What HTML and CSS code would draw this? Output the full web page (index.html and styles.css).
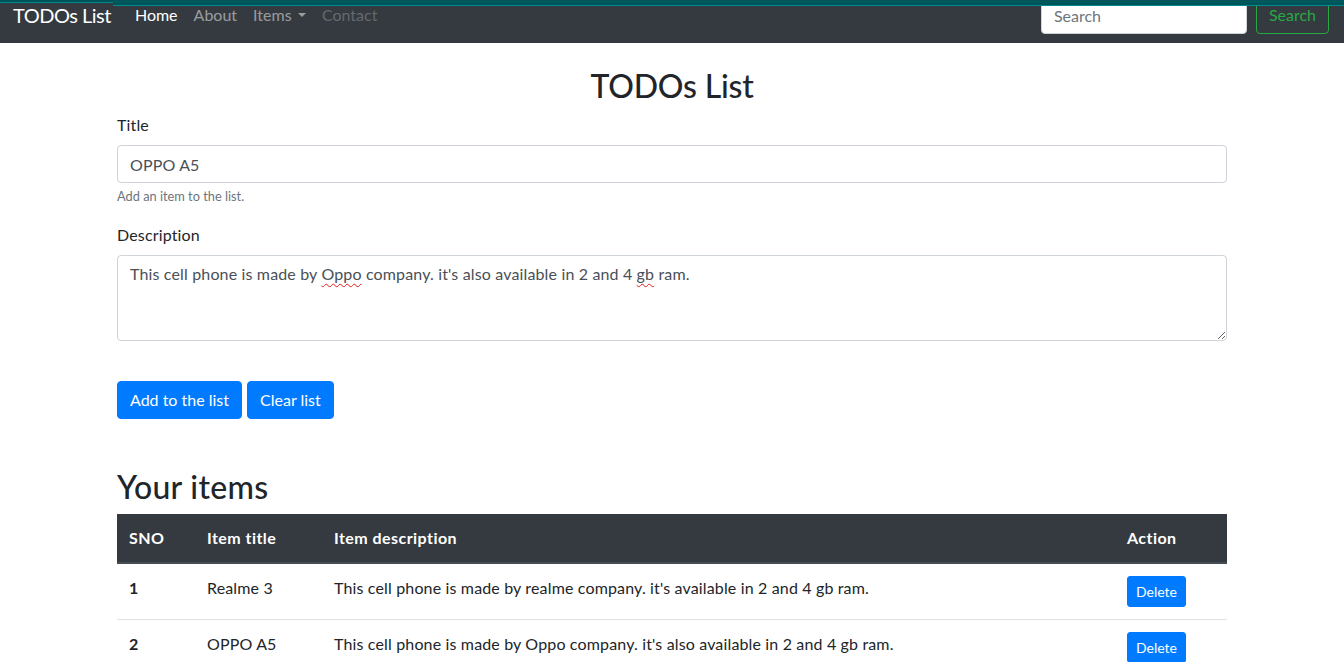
FILE: index.html
```html
<!DOCTYPE html>
<html lang="en">
<head>
<meta charset="utf-8">
<title>TODOs List</title>
<link rel="stylesheet" href="styles.css">
</head>
<body>
<div class="topstrip"><div class="strip-left"></div><div class="strip-right"></div></div>
<nav class="navbar">
  <a class="brand" href="#">TODOs List</a>
  <ul class="nav">
    <li><a class="nav-link active" href="#">Home</a></li>
    <li><a class="nav-link" href="#">About</a></li>
    <li><a class="nav-link" href="#">Items<span class="caret"></span></a></li>
    <li><a class="nav-link disabled" href="#">Contact</a></li>
  </ul>
  <form class="nav-search">
    <input class="search-input" type="search" placeholder="Search">
    <button class="btn-outline-success" type="button">Search</button>
  </form>
</nav>

<main class="container">
  <h2 class="page-title">TODOs List</h2>
  <div class="form-group">
    <label class="label">Title</label>
    <input class="form-control" type="text" value="OPPO A5">
    <small class="form-text">Add an item to the list.</small>
  </div>
  <div class="form-group">
    <label class="label">Description</label>
    <div class="form-control textarea">This cell phone is made by <span class="misspelled">Oppo</span> company. it's also available in 2 and 4 <span class="misspelled">gb</span> ram.</div>
  </div>
  <div class="actions">
    <button class="btn btn-primary" type="button">Add to the list</button>
    <button class="btn btn-primary" type="button">Clear list</button>
  </div>

  <section class="items">
    <h2 class="section-title">Your items</h2>
    <table class="table">
      <colgroup>
        <col class="col-sno">
        <col class="col-title">
        <col>
        <col class="col-action">
      </colgroup>
      <thead>
        <tr>
          <th>SNO</th>
          <th>Item title</th>
          <th>Item description</th>
          <th>Action</th>
        </tr>
      </thead>
      <tbody>
        <tr>
          <th>1</th>
          <td>Realme 3</td>
          <td>This cell phone is made by realme company. it's available in 2 and 4 gb ram.</td>
          <td><button class="btn btn-primary btn-sm" type="button">Delete</button></td>
        </tr>
        <tr>
          <th>2</th>
          <td>OPPO A5</td>
          <td>This cell phone is made by Oppo company. it's also available in 2 and 4 gb ram.</td>
          <td><button class="btn btn-primary btn-sm" type="button">Delete</button></td>
        </tr>
      </tbody>
    </table>
  </section>
</main>
</body>
</html>
```

FILE: styles.css
```css
* { box-sizing: border-box; }

html, body {
  margin: 0;
  padding: 0;
}

body {
  font-family: "Segoe UI", Lato, "Liberation Sans", sans-serif;
  font-size: 16px;
  line-height: 1.5;
  letter-spacing: 0.15px;
  color: #212529;
  background: #fff;
}

.topstrip {
  position: absolute;
  top: 0;
  left: 0;
  right: 0;
  display: flex;
  align-items: flex-start;
  z-index: 10;
}
.strip-left {
  width: 113px;
  height: 3px;
  background: #005257;
  border-bottom: 1px solid #00898e;
}
.strip-right {
  flex: 1;
  height: 6px;
  background: #00575b;
  border-bottom: 1px solid #00898e;
}

.navbar {
  display: flex;
  align-items: center;
  margin-top: -13px;
  height: 56px;
  padding: 8px 15px 8px 13px;
  background: #343a40;
}

.brand {
  font-size: 20px;
  line-height: 30px;
  letter-spacing: -0.5px;
  padding: 5px 0;
  margin-right: 16px;
  color: #fff;
  text-decoration: none;
}

.nav {
  display: flex;
  list-style: none;
  margin: 0;
  padding: 0;
  letter-spacing: 0;
}

.nav-link {
  display: block;
  padding: 8px;
  color: rgba(255, 255, 255, 0.5);
  text-decoration: none;
}
.nav-link.active { color: #fff; }
.nav-link.disabled { color: rgba(255, 255, 255, 0.25); }

.caret {
  display: inline-block;
  margin-left: 0.4em;
  vertical-align: 0.255em;
  border-top: 0.3em solid;
  border-right: 0.3em solid transparent;
  border-left: 0.3em solid transparent;
}

.nav-search {
  display: flex;
  align-items: center;
  margin: 0 0 0 auto;
  letter-spacing: 0;
}

.search-input {
  width: 206px;
  height: 38px;
  padding: 6px 12px;
  margin-right: 9px;
  font: inherit;
  color: #495057;
  background: #fff;
  border: 1px solid #ced4da;
  border-radius: 4px;
}
.search-input::placeholder { color: #6c757d; }

.btn-outline-success {
  height: 38px;
  padding: 6px 12px;
  font: inherit;
  color: #28a745;
  background: transparent;
  border: 1px solid #28a745;
  border-radius: 4px;
}

.container {
  width: 1110px;
  margin: 24px auto;
}

.page-title {
  margin: 0 0 8px;
  font-size: 32px;
  font-weight: 500;
  line-height: 1.2;
  letter-spacing: -0.2px;
  text-align: center;
}

.form-group { margin-bottom: 16px; }

.label {
  display: inline-block;
  margin-bottom: 8px;
}

.form-control {
  display: block;
  width: 100%;
  height: 38px;
  padding: 6px 12px;
  font: inherit;
  letter-spacing: 0.15px;
  color: #495057;
  background: #fff;
  border: 1px solid #ced4da;
  border-radius: 4px;
}

.textarea {
  height: 86px;
  resize: vertical;
  overflow: auto;
}

.misspelled {
  text-decoration: underline wavy #e51c1c;
  text-decoration-thickness: 1px;
  text-underline-offset: 3px;
}

.form-text {
  display: block;
  margin-top: 4px;
  font-size: 12.8px;
  letter-spacing: 0;
  color: #6c757d;
}

.actions {
  display: flex;
  gap: 5px;
  margin-top: 40px;
}

.btn {
  display: inline-block;
  padding: 6px 12px;
  font: inherit;
  line-height: 24px;
  letter-spacing: 0;
  border: 1px solid transparent;
  border-radius: 4px;
  cursor: pointer;
}

.btn-primary {
  color: #fff;
  background: #007bff;
  border-color: #007bff;
}

.btn-sm {
  padding: 4px 8px;
  font-size: 14px;
  line-height: 21px;
  border-radius: 3px;
}

.items { margin-top: 49px; }

.section-title {
  margin: 0 0 8px;
  font-size: 32px;
  font-weight: 500;
  line-height: 1.2;
  letter-spacing: 0.3px;
}

.table {
  width: 100%;
  border-collapse: collapse;
  table-layout: fixed;
}

.col-sno { width: 78px; }
.col-title { width: 127px; }
.col-action { width: 112px; }

.table th,
.table td {
  padding: 12px;
  text-align: left;
  vertical-align: top;
  border-top: 1px solid #dee2e6;
}

.table th { font-weight: 700; }

.table thead th {
  vertical-align: bottom;
  letter-spacing: 0.45px;
  color: #fff;
  background: #343a40;
  border-color: #454d55;
  border-top: 0;
  border-bottom: 2px solid #454d55;
}
```
